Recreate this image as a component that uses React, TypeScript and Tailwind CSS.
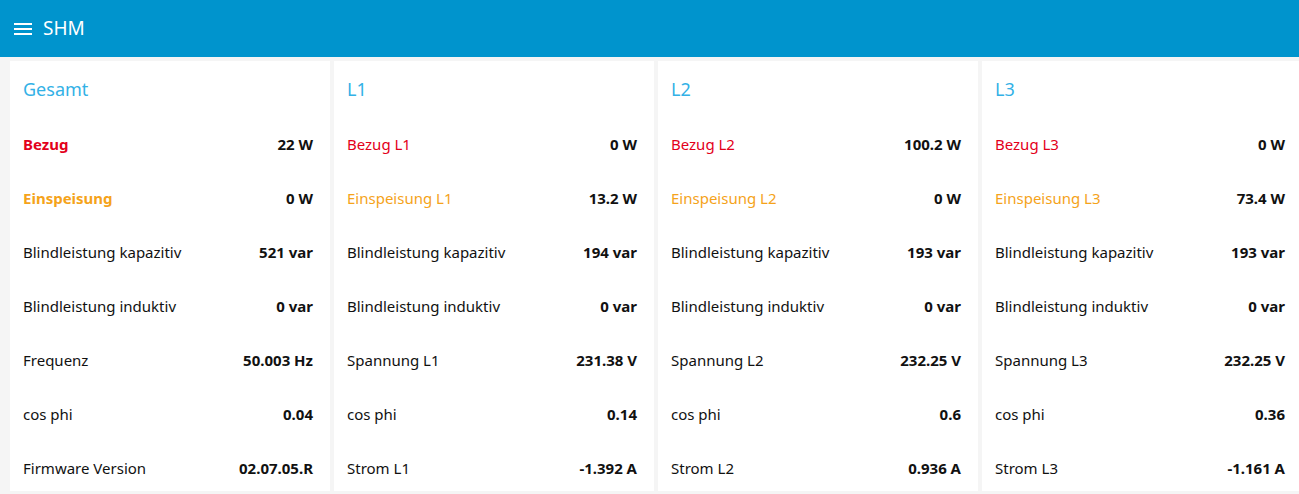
import React from "react";

type Row = { label: string; value: string; tone?: "red" | "orange"; bold?: boolean };
type Card = { title: string; rows: Row[] };

const cards: Card[] = [
  {
    title: "Gesamt",
    rows: [
      { label: "Bezug", value: "22 W", tone: "red", bold: true },
      { label: "Einspeisung", value: "0 W", tone: "orange", bold: true },
      { label: "Blindleistung kapazitiv", value: "521 var" },
      { label: "Blindleistung induktiv", value: "0 var" },
      { label: "Frequenz", value: "50.003 Hz" },
      { label: "cos phi", value: "0.04" },
      { label: "Firmware Version", value: "02.07.05.R" },
    ],
  },
  {
    title: "L1",
    rows: [
      { label: "Bezug L1", value: "0 W", tone: "red" },
      { label: "Einspeisung L1", value: "13.2 W", tone: "orange" },
      { label: "Blindleistung kapazitiv", value: "194 var" },
      { label: "Blindleistung induktiv", value: "0 var" },
      { label: "Spannung L1", value: "231.38 V" },
      { label: "cos phi", value: "0.14" },
      { label: "Strom L1", value: "-1.392 A" },
    ],
  },
  {
    title: "L2",
    rows: [
      { label: "Bezug L2", value: "100.2 W", tone: "red" },
      { label: "Einspeisung L2", value: "0 W", tone: "orange" },
      { label: "Blindleistung kapazitiv", value: "193 var" },
      { label: "Blindleistung induktiv", value: "0 var" },
      { label: "Spannung L2", value: "232.25 V" },
      { label: "cos phi", value: "0.6" },
      { label: "Strom L2", value: "0.936 A" },
    ],
  },
  {
    title: "L3",
    rows: [
      { label: "Bezug L3", value: "0 W", tone: "red" },
      { label: "Einspeisung L3", value: "73.4 W", tone: "orange" },
      { label: "Blindleistung kapazitiv", value: "193 var" },
      { label: "Blindleistung induktiv", value: "0 var" },
      { label: "Spannung L3", value: "232.25 V" },
      { label: "cos phi", value: "0.36" },
      { label: "Strom L3", value: "-1.161 A" },
    ],
  },
];

function labelClass(r: Row) {
  const color =
    r.tone === "red" ? "text-[#e3001b]" : r.tone === "orange" ? "text-[#f5a31a]" : "text-[#111111]";
  return `${color} ${r.bold ? "font-bold" : "font-normal"}`;
}

export default function App() {
  return (
    <div
      className="w-[1299px] h-[494px] overflow-hidden bg-[#f5f5f5] flex flex-col"
      style={{ fontFamily: '"Noto Sans", "Open Sans", Arial, sans-serif' }}
    >
      <header className="h-[57px] flex-none bg-[#0094cd] flex items-center pl-[14px] text-white">
        <svg width="18" height="14" viewBox="0 0 18 14" className="flex-none">
          <rect x="0" y="1" width="18" height="2" fill="white" />
          <rect x="0" y="6" width="18" height="2" fill="white" />
          <rect x="0" y="11" width="18" height="2" fill="white" />
        </svg>
        <span className="ml-[11px] text-[19px] leading-none">SHM</span>
      </header>
      <div className="flex gap-[4px] pl-[10px] pt-[4px]">
        {cards.map((c) => (
          <div key={c.title} className="flex-none w-[320px] h-[430px] bg-white pl-[13px] pr-[17px] pt-[14px]">
            <div className="h-[28px] flex items-center text-[18px] text-[#33b1e6]">{c.title}</div>
            <div className="mt-[14px] flex flex-col">
              {c.rows.map((r) => (
                <div key={r.label} className="h-[54px] flex-none flex items-center justify-between">
                  <span className={`${labelClass(r)} text-[15px]`}>{r.label}</span>
                  <span className="font-bold text-[#111111] text-[15px]">{r.value}</span>
                </div>
              ))}
            </div>
          </div>
        ))}
      </div>
    </div>
  );
}
